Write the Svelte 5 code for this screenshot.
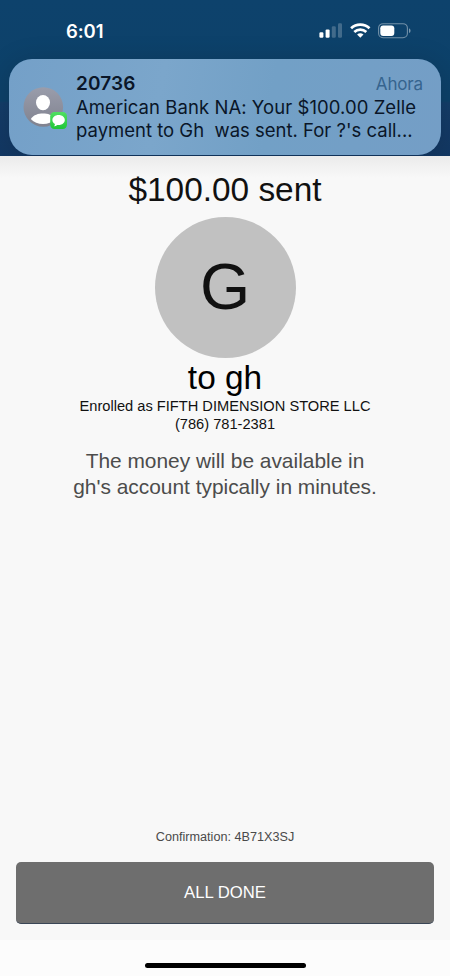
<script>
  const notice = {
    sender: '20736',
    time: 'Ahora',
    lines: ['American Bank NA: Your $100.00 Zelle', "payment to Gh \u00a0was sent. For ?'s call..."]
  };
</script>

<div class="screen">
  <header>
    <div class="status">
      <span class="clock">6:01</span>
      <div class="indicators">
        <svg class="signal" width="24" height="16" viewBox="0 0 24 16">
          <rect x="0.4" y="9.3" width="4" height="5.4" rx="1.2" fill="#fff" />
          <rect x="6.6" y="6.4" width="4" height="8.3" rx="1.2" fill="#fff" />
          <rect x="12.8" y="3.2" width="4" height="11.5" rx="1.2" fill="#fff" opacity=".22" />
          <rect x="19" y="0.2" width="4" height="14.5" rx="1.2" fill="#fff" opacity=".22" />
        </svg>
        <svg class="wifi" width="21" height="16" viewBox="0 0 21 16">
          <g fill="none" stroke="#fff" stroke-width="2.7">
            <path d="M1.1 5.3 A13.4 13.4 0 0 1 19.5 5.3" />
            <path d="M4.3 8.9 A8.8 8.8 0 0 1 16.3 8.9" />
          </g>
          <path d="M7.1 11.5 Q10.3 8.8 13.5 11.5 L10.3 14.8 Z" fill="#fff" />
        </svg>
        <svg class="battery" width="33" height="16" viewBox="0 0 33 16">
          <rect x="0.6" y="0.7" width="28.8" height="14" rx="4.4" fill="none" stroke="#fff" stroke-opacity=".42" stroke-width="1.1" />
          <rect x="2.3" y="2.4" width="14" height="10.6" rx="2.9" fill="#fff" />
          <path d="M31 5.3 Q32.6 6 32.6 7.7 Q32.6 9.4 31 10.1 Z" fill="#fff" opacity=".45" />
        </svg>
      </div>
    </div>
    <section class="notice">
      <svg class="sender" width="44" height="44" viewBox="0 0 44 44">
        <defs>
          <linearGradient id="face" x1="0" y1="0" x2="0" y2="1">
            <stop offset="0" stop-color="#9a9dab" />
            <stop offset="1" stop-color="#80828f" />
          </linearGradient>
          <linearGradient id="bubble" x1="0" y1="0" x2="0" y2="1">
            <stop offset="0" stop-color="#51df63" />
            <stop offset="1" stop-color="#20c638" />
          </linearGradient>
        </defs>
        <circle cx="20.3" cy="20" r="19.8" fill="url(#face)" />
        <ellipse cx="20" cy="15.6" rx="7" ry="7.6" fill="#fff" />
        <path d="M7.8 32 C11 27.7 15 26.5 20 26.5 C25 26.5 29 27.7 32.2 32 C29 35.3 25 37 20 37 C15 37 11 35.3 7.8 32 Z" fill="#fff" />
        <rect x="27.2" y="25" width="16.8" height="17" rx="4.2" fill="url(#bubble)" />
        <path d="M35.6 28 C39.2 28 41.8 30.2 41.8 33 C41.8 35.8 39.2 38 35.6 38 L34.3 37.9 Q32.7 39.1 31 39.2 Q32 38.2 31.9 37 C30.3 36.1 29.4 34.7 29.4 33 C29.4 30.2 32 28 35.6 28 Z" fill="#fff" />
      </svg>
      <div class="message">
        <div class="top"><b>{notice.sender}</b><span class="time">{notice.time}</span></div>
        <div class="line first">{notice.lines[0]}</div>
        <div class="line second">{notice.lines[1]}</div>
      </div>
    </section>
  </header>

  <main>
    <h1>$100.00 sent</h1>
    <div class="avatar">G</div>
    <h2>to gh</h2>
    <p class="detail">Enrolled as FIFTH DIMENSION STORE LLC<br />(786) 781-2381</p>
    <p class="info">The money will be available in<br />gh's account typically in minutes.</p>
    <p class="confirm">Confirmation: 4B71X3SJ</p>
    <button>ALL DONE</button>
  </main>
  <footer><div class="home"></div></footer>
</div>

<style>
  .screen {
    width: 450px;
    height: 976px;
    display: flex;
    flex-direction: column;
    overflow: hidden;
    background: #f8f8f8;
    font-family: 'Liberation Sans', Arial, sans-serif;
    color: #111;
  }
  header {
    height: 155.5px;
    flex: none;
    box-sizing: border-box;
    background: linear-gradient(#0d426c 0, #0d4169 101px, #143d69 103px, #123762 100%);
    font-family: Inter, sans-serif;
  }
  .status {
    height: 58.5px;
    box-sizing: border-box;
    padding: 18px 39.5px 0 66px;
    display: flex;
    justify-content: space-between;
    align-items: flex-start;
  }
  .clock {
    font-size: 18.5px;
    line-height: 26px;
    font-weight: 600;
    color: #fff;
    letter-spacing: -0.1px;
  }
  .indicators {
    display: flex;
    padding-top: 4.7px;
  }
  .wifi { margin-left: 6.8px; }
  .battery { margin-left: 7px; }
  .notice {
    width: 432.5px;
    height: 96.5px;
    margin-left: 8.5px;
    box-sizing: border-box;
    padding: 13px 18px 0 14.5px;
    border-radius: 23px;
    background: linear-gradient(100deg, #74a0c8, #7ba6cb 35%, #72a0c6 60%, #749ec6);
    box-shadow: 0 3px 28px rgba(0, 0, 0, 0.15);
    display: flex;
    color: #0a1628;
  }
  .sender {
    flex: none;
    margin-top: 15.5px;
  }
  .message {
    flex: 1;
    margin-left: 9px;
    white-space: nowrap;
  }
  .top {
    display: flex;
    justify-content: space-between;
    height: 24.5px;
    line-height: 23px;
  }
  .top b {
    font-size: 19px;
    font-weight: 600;
    letter-spacing: 0.12px;
  }
  .time {
    font-size: 17px;
    line-height: 25px;
    letter-spacing: -0.15px;
    color: #36648e;
  }
  .line {
    font-size: 18.5px;
    line-height: 23px;
  }
  .first { letter-spacing: 0.06px; }
  main {
    height: 784.5px;
    flex: none;
    box-sizing: border-box;
    padding: 14px 16px 16px;
    display: flex;
    flex-direction: column;
    align-items: center;
    text-align: center;
    background: linear-gradient(#ebebeb, #f8f8f8 22px);
  }
  h1, h2, p { margin: 0; font-weight: 400; }
  h1 {
    font-size: 33.4px;
    line-height: 40px;
  }
  .avatar {
    width: 141px;
    height: 141px;
    flex: none;
    margin-top: 7px;
    border-radius: 50%;
    background: #c1c1c1;
    font-size: 64.5px;
    line-height: 141px;
  }
  h2 {
    margin-top: 1.5px;
    font-size: 33.4px;
    line-height: 37.5px;
    color: #000;
  }
  .detail {
    font-size: 14.65px;
    line-height: 18px;
  }
  .info {
    margin-top: 15px;
    font-size: 20.9px;
    line-height: 26px;
    color: #4c4c4c;
  }
  .confirm {
    margin-top: auto;
    font-size: 12.65px;
    line-height: 16px;
    color: #4a4a4a;
  }
  button {
    width: 418px;
    height: 62.5px;
    flex: none;
    margin-top: 16.5px;
    padding: 1.5px 0 0;
    border: 0;
    border-bottom: 1.5px solid #3a4656;
    border-radius: 5px;
    background: #6e6e6e;
    color: #fff;
    font: 16.7px 'Liberation Sans', Arial, sans-serif;
  }
  footer {
    flex: 1;
    display: flex;
    justify-content: center;
    background: #fcfcfc;
  }
  .home {
    width: 161px;
    height: 5px;
    margin-top: 22.5px;
    border-radius: 3px;
    background: #000;
  }
</style>
